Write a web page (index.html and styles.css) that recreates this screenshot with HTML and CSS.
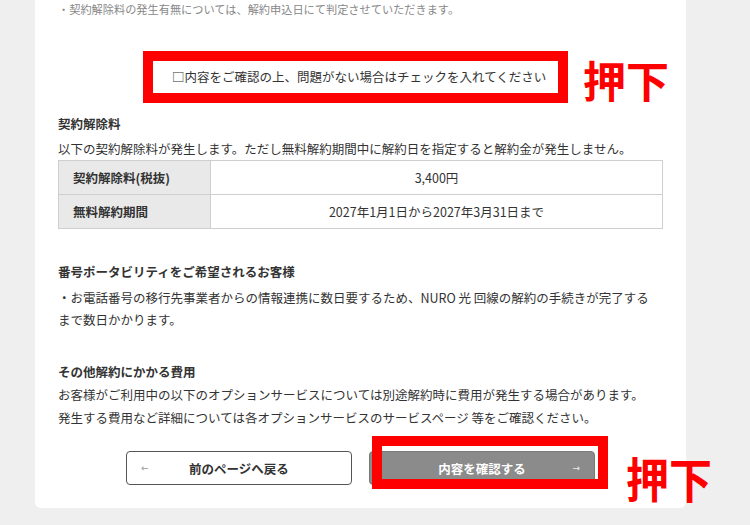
FILE: index.html
```html
<!DOCTYPE html>
<html lang="ja">
<head>
<meta charset="utf-8">
<title>解約内容の確認</title>
<link rel="stylesheet" href="styles.css">
</head>
<body>
<main class="panel">
  <p class="note">・契約解除料の発生有無については、解約申込日にて判定させていただきます。</p>

  <div class="check-row">
    <div class="check-box">
      <span class="check-text">□内容をご確認の上、問題がない場合はチェックを入れてください</span>
      <span class="press press-1">押下</span>
    </div>
  </div>

  <section class="sec sec-fee">
    <h2 class="sec-title">契約解除料</h2>
    <p class="sec-text">以下の契約解除料が発生します。ただし無料解約期間中に解約日を指定すると解約金が発生しません。</p>
    <table class="fee-table">
      <tr><th>契約解除料(税抜)</th><td>3,400円</td></tr>
      <tr><th>無料解約期間</th><td>2027年1月1日から2027年3月31日まで</td></tr>
    </table>
  </section>

  <section class="sec sec-port">
    <h2 class="sec-title">番号ポータビリティをご希望されるお客様</h2>
    <p class="sec-text">・お電話番号の移行先事業者からの情報連携に数日要するため、NURO 光 回線の解約の手続きが完了する<br>まで数日かかります。</p>
  </section>

  <section class="sec sec-other">
    <h2 class="sec-title">その他解約にかかる費用</h2>
    <p class="sec-text loose">お客様がご利用中の以下のオプションサービスについては別途解約時に費用が発生する場合があります。<br>発生する費用など詳細については各オプションサービスのサービスページ 等をご確認ください。</p>
  </section>

  <div class="actions">
    <button class="btn btn-back" type="button">
      <span class="arrow arrow-left">&#8592;</span>
      <span class="btn-label">前のページへ戻る</span>
      <span class="arrow"></span>
    </button>
    <button class="btn btn-next" type="button">
      <span class="arrow"></span>
      <span class="btn-label">内容を確認する</span>
      <span class="arrow arrow-right">&#8594;</span>
      <span class="mark-box"></span>
      <span class="press press-2">押下</span>
    </button>
  </div>
</main>
</body>
</html>
```
FILE: styles.css
```css
html, body {
  margin: 0;
  padding: 0;
}

body {
  background: #efefef;
  font-family: "Noto Sans CJK JP", "Noto Sans", sans-serif;
  color: #333;
  width: 750px;
  height: 525px;
  overflow: hidden;
}

.panel {
  margin-left: 35px;
  width: 651px;
  box-sizing: border-box;
  padding: 0 23px 23px;
  background: #fff;
  border-radius: 0 0 6px 6px;
}

.note {
  margin: 0;
  font-size: 11.2px;
  line-height: 18px;
  color: #888;
}

.check-row {
  display: flex;
  justify-content: center;
  margin-top: 33px;
}

.check-box {
  position: relative;
  width: 425px;
  height: 52px;
  box-sizing: border-box;
  border: 10px solid #ff0000;
  margin-right: 10px;
  display: flex;
  align-items: center;
  padding-left: 19px;
}

.check-text {
  font-size: 12.5px;
  line-height: 18px;
  color: #333;
  white-space: nowrap;
}

.press {
  position: absolute;
  color: #ff0000;
  font-weight: 700;
  font-size: 43px;
  line-height: 1;
  white-space: nowrap;
  font-family: "Noto Sans CJK JP", sans-serif;
}

.press-1 {
  left: calc(100% + 25px);
  top: -3px;
}

.sec-title {
  margin: 0;
  font-size: 12.5px;
  font-weight: 700;
  line-height: 18px;
}

.sec-text {
  margin: 0;
  font-size: 12.5px;
  line-height: 22px;
  white-space: nowrap;
}

.sec-text.loose {
  line-height: 23px;
}

.sec-fee {
  margin-top: 12px;
}

.sec-fee .sec-title {
  margin-bottom: 5px;
}

.fee-table {
  width: 100%;
  border-collapse: collapse;
  font-size: 12.5px;
}

.fee-table th,
.fee-table td {
  border: 1px solid #cfcfcf;
  height: 33px;
  padding: 0;
}

.fee-table th {
  width: 137px;
  background: #e9e9e9;
  text-align: left;
  padding-left: 14px;
  font-weight: 700;
}

.fee-table td {
  text-align: center;
}

.sec-port {
  margin-top: 32px;
}

.sec-port .sec-title,
.sec-other .sec-title {
  line-height: 22px;
  margin-bottom: 4px;
}

.sec-other {
  margin-top: 30px;
}

.sec-other .sec-title {
  margin-bottom: 0;
}

.actions {
  display: flex;
  justify-content: center;
  gap: 17px;
  margin-top: 22px;
}

.btn {
  position: relative;
  width: 226px;
  height: 34px;
  box-sizing: border-box;
  border-radius: 4px;
  display: grid;
  grid-template-columns: 30px 1fr 30px;
  align-items: center;
  padding: 0;
  font-family: "Noto Sans CJK JP", sans-serif;
  font-size: 12.5px;
  font-weight: 700;
}

.btn-back {
  background: #fff;
  border: 1px solid #555;
  color: #333;
}

.btn-next {
  background: #8b8b8b;
  border: 1px solid #7a7a7a;
  color: #fff;
}

.btn-label {
  text-align: center;
}

.arrow {
  font-size: 9px;
  font-weight: 700;
  font-family: "DejaVu Sans", sans-serif;
}

.arrow-left {
  color: #aaa;
  text-align: left;
  padding-left: 14px;
}

.arrow-right {
  color: #ddd;
  text-align: right;
  padding-right: 14px;
}

.mark-box {
  position: absolute;
  left: 2px;
  top: -16px;
  width: 236px;
  height: 53px;
  box-sizing: border-box;
  border: 10px solid #ff0000;
}

.press-2 {
  left: 256px;
  top: 1px;
  transform: scaleY(1.12);
  transform-origin: top left;
}
```
